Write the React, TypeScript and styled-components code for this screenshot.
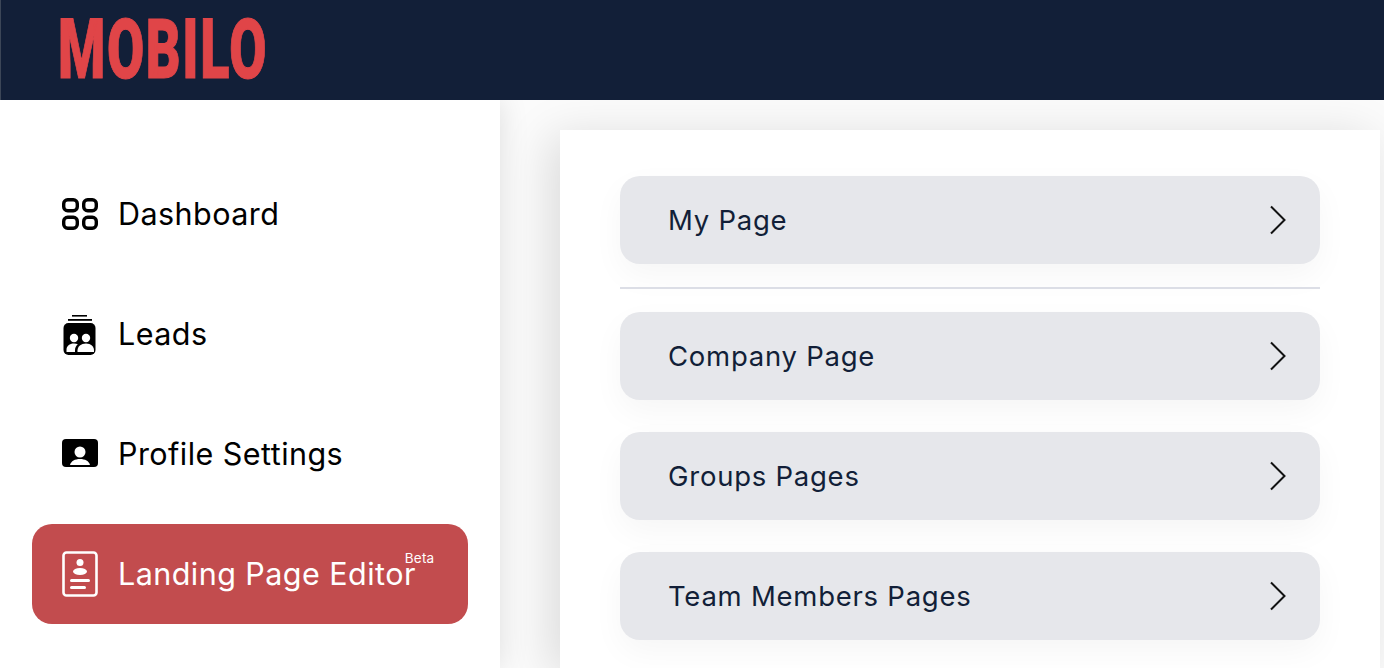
import styled, { createGlobalStyle } from "styled-components";
import { ReactNode } from "react";

const GlobalStyle = createGlobalStyle`
  html, body {
    margin: 0;
    padding: 0;
    height: 100%;
    overflow: hidden;
    background: #fff;
  }
  * {
    box-sizing: border-box;
  }
  body {
    font-family: Inter, "Liberation Sans", sans-serif;
  }
`;

const Page = styled.div`
  width: 1384px;
  height: 668px;
  display: flex;
  flex-direction: column;
  overflow: hidden;
`;

const Header = styled.header`
  flex: 0 0 100px;
  background: #121f38;
  border-left: 1px solid #3c4657;
  padding-left: 57px;
  display: flex;
  align-items: center;
  position: relative;
  z-index: 3;
`;

const Logo = styled.div`
  font-family: Roboto, "Liberation Sans", sans-serif;
  font-weight: 900;
  font-size: 83px;
  line-height: 1;
  color: #e04548;
  -webkit-text-stroke: 1px #e04548;
  transform: scaleX(0.65);
  transform-origin: left center;
  margin-top: -2px;
  letter-spacing: 2.5px;
  white-space: nowrap;
`;

const Body = styled.div`
  flex: 1;
  display: flex;
  min-height: 0;
  background: #fbfbfb;
`;

const Sidebar = styled.nav`
  flex: 0 0 500px;
  background: #fff;
  padding: 64px 32px 0;
  display: flex;
  flex-direction: column;
  gap: 20px;
  position: relative;
  z-index: 1;
  box-shadow: 0 0 28px rgba(0, 0, 0, 0.12);
`;

const NavItem = styled.a<{ $active?: boolean }>`
  flex: 0 0 100px;
  display: flex;
  align-items: center;
  gap: 20px;
  padding-left: 30px;
  border-radius: 20px;
  font-size: 30.5px;
  letter-spacing: 0.45px;
  color: ${(p) => (p.$active ? "#fff" : "#000")};
  background: ${(p) => (p.$active ? "#c24c4e" : "transparent")};
`;

const NavIcon = styled.svg`
  width: 36px;
  height: 48px;
  flex: none;
`;

const NavLabel = styled.span`
  position: relative;
  margin-top: -2px;
  white-space: nowrap;
`;

const Badge = styled.span`
  position: absolute;
  left: 100%;
  margin-left: -11px;
  top: -5px;
  font-size: 13.5px;
  letter-spacing: 0.2px;
  color: #fff;
`;

const Main = styled.main`
  flex: 1;
  min-width: 0;
  padding: 30px 4px 0 60px;
  display: flex;
`;

const Card = styled.section`
  flex: 1;
  background: #fff;
  padding: 46px 60px 0;
  display: flex;
  flex-direction: column;
  gap: 32px;
  box-shadow: -10px 6px 44px rgba(0, 0, 0, 0.13);
`;

const Group = styled.div`
  display: flex;
  flex-direction: column;
  gap: 23px;
`;

const Divider = styled.hr`
  margin: 0;
  border: 0;
  height: 2px;
  background: #dcdee6;
`;

const Row = styled.a`
  flex: 0 0 88px;
  height: 88px;
  display: flex;
  align-items: center;
  justify-content: space-between;
  padding: 0 32px 0 48px;
  border-radius: 20px;
  background: #e6e7eb;
  color: #121f38;
  font-size: 27.5px;
  letter-spacing: 0.75px;
  box-shadow: 0 12px 32px rgba(0, 0, 0, 0.04);
`;

const Chevron = styled.svg`
  width: 20px;
  height: 32px;
  flex: none;
`;

const DashboardIcon = () => (
  <NavIcon viewBox="0 0 36 48" fill="none" stroke="#000" strokeWidth="3.4">
    <rect x="1.7" y="9.7" width="13.6" height="11" rx="4" />
    <rect x="21.7" y="9.7" width="12.6" height="11" rx="4" />
    <rect x="1.7" y="27.3" width="13.6" height="11" rx="4" />
    <rect x="21.7" y="27.3" width="12.6" height="11" rx="4" />
  </NavIcon>
);

const LeadsIcon = () => (
  <NavIcon viewBox="0 0 36 48">
    <rect x="10" y="5" width="15" height="1.6" fill="#000" />
    <rect x="6" y="9" width="24" height="1.8" fill="#000" />
    <rect x="1.5" y="13" width="32" height="32" rx="5" fill="#000" />
    <circle cx="12" cy="28" r="4.2" fill="#fff" />
    <circle cx="24" cy="28" r="4.2" fill="#fff" />
    <path d="M4.5 42v-2c0-4 3-6.500 7.500-6.500 1.500 0 2.800.3 3.800.8-1.800 1.500-2.800 3.600-2.800 6.200V42H4.500z" fill="#fff" />
    <path d="M15.500 42v-1.500c0-4 3.500-7 8.500-7s8 3 8 7V42H15.500z" fill="#fff" />
  </NavIcon>
);

const ProfileIcon = () => (
  <NavIcon viewBox="0 0 36 48">
    <rect x="0" y="9" width="36" height="28" rx="4" fill="#000" />
    <circle cx="18" cy="22" r="5.500" fill="#fff" />
    <path d="M8 35c1-4 5-6 10-6s9 2 10 6H8z" fill="#fff" />
  </NavIcon>
);

const LandingIcon = () => (
  <NavIcon viewBox="0 0 36 48">
    <rect x="1.500" y="2.500" width="33" height="43" rx="3" fill="none" stroke="#fff" strokeWidth="2.600" />
    <circle cx="18" cy="12.500" r="3.500" fill="#fff" />
    <ellipse cx="18" cy="21.500" rx="7" ry="3.500" fill="#fff" />
    <rect x="8" y="29" width="20" height="3" rx="1.500" fill="#fff" />
    <rect x="8" y="36" width="16" height="3" rx="1.500" fill="#fff" />
  </NavIcon>
);

const ChevronIcon = () => (
  <Chevron viewBox="0 0 20 32" fill="none" stroke="#121212" strokeWidth="2">
    <polyline points="3,2.500 16.500,16 3,29.500" />
  </Chevron>
);

const navItems: { label: string; icon: ReactNode; active?: boolean; badge?: string }[] = [
  { label: "Dashboard", icon: <DashboardIcon /> },
  { label: "Leads", icon: <LeadsIcon /> },
  { label: "Profile Settings", icon: <ProfileIcon /> },
  { label: "Landing Page Editor", icon: <LandingIcon />, active: true, badge: "Beta" },
];

const pages = ["Groups Pages", "Team Members Pages"];

const App = () => {
  return (
    <Page>
      <GlobalStyle />
      <Header>
        <Logo>MOBILO</Logo>
      </Header>
      <Body>
        <Sidebar>
          {navItems.map((item) => (
            <NavItem key={item.label} $active={item.active}>
              {item.icon}
              <NavLabel>
                {item.label}
                {item.badge && <Badge>{item.badge}</Badge>}
              </NavLabel>
            </NavItem>
          ))}
        </Sidebar>
        <Main>
          <Card>
            <Group>
              <Row>
                My Page
                <ChevronIcon />
              </Row>
              <Divider />
              <Row>
                Company Page
                <ChevronIcon />
              </Row>
            </Group>
            {pages.map((page) => (
              <Row key={page}>
                {page}
                <ChevronIcon />
              </Row>
            ))}
          </Card>
        </Main>
      </Body>
    </Page>
  );
};

export default App;
